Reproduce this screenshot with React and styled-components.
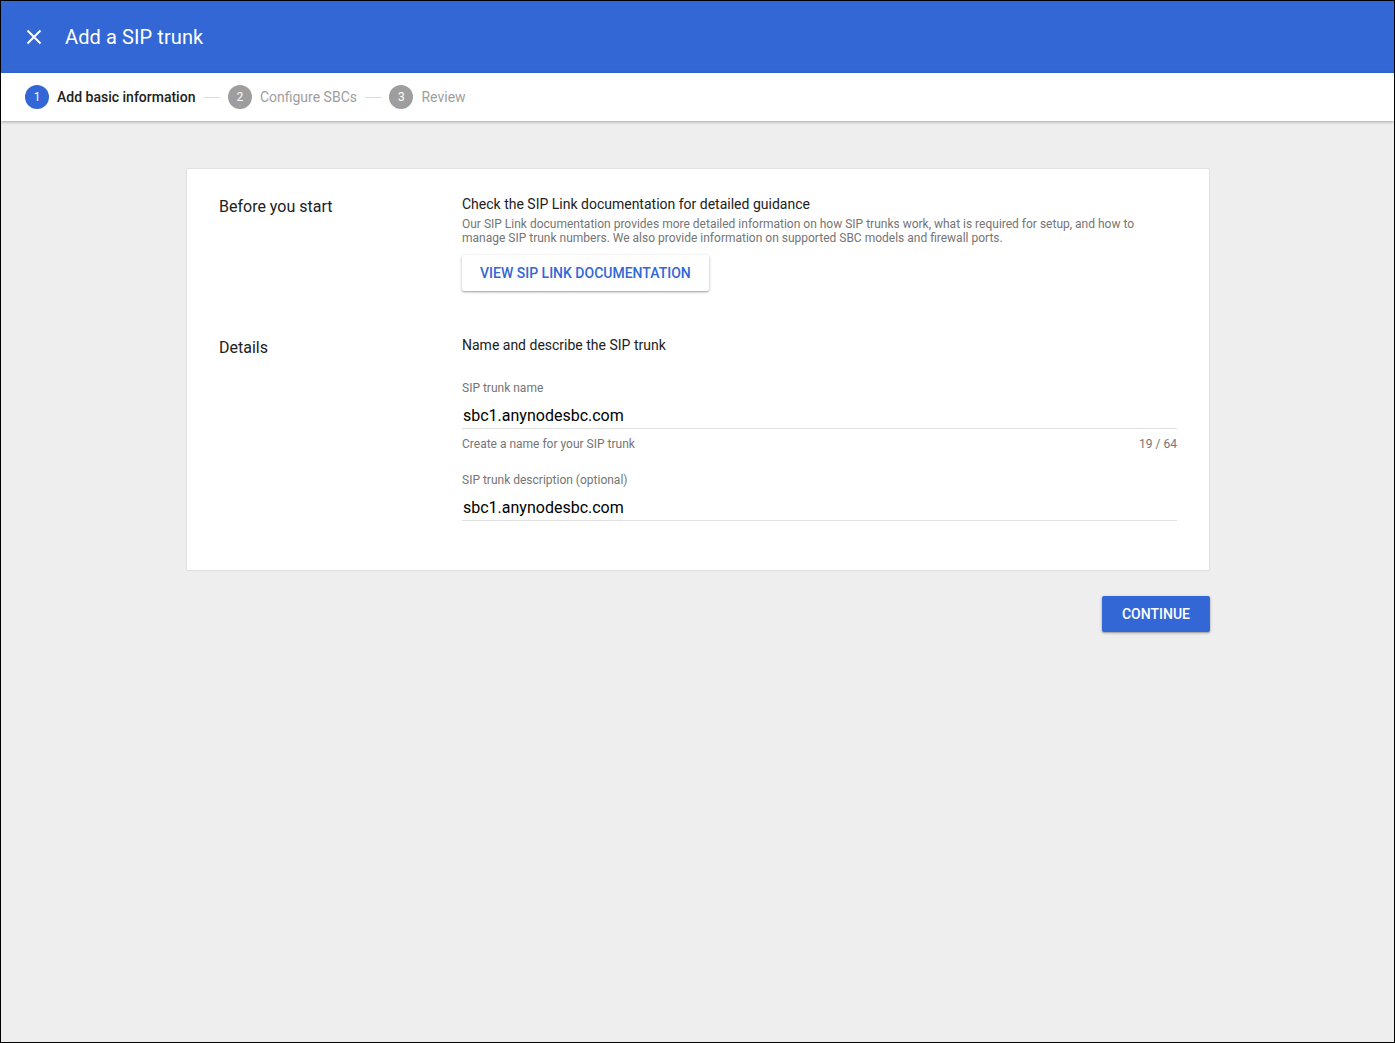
import React from 'react';
import styled, { createGlobalStyle } from 'styled-components';

const GlobalStyle = createGlobalStyle`
  html, body {
    margin: 0;
    padding: 0;
  }
  body {
    font-family: Roboto, "Liberation Sans", Arial, sans-serif;
    background: #eeeeee;
  }
  * { box-sizing: border-box; }
`;

const Frame = styled.div`
  width: 1395px;
  height: 1043px;
  border: 1px solid #000;
  background: #eeeeee;
  display: flex;
  flex-direction: column;
  overflow: hidden;
`;

const Header = styled.header`
  height: 72px;
  background: #3367d6;
  display: flex;
  align-items: center;
  padding-left: 24px;
  color: #fff;
  flex-shrink: 0;
`;

const CloseButton = styled.button`
  width: 18px;
  height: 18px;
  padding: 0;
  border: none;
  background: transparent;
  display: flex;
  align-items: center;
  justify-content: center;
  cursor: pointer;
  margin-right: 22px;
`;

const Title = styled.h1`
  margin: 0;
  font-size: 20px;
  font-weight: 400;
  letter-spacing: 0.1px;
`;

const Stepper = styled.nav`
  height: 48px;
  background: #fff;
  display: flex;
  align-items: center;
  padding-left: 24px;
  box-shadow: 0 1px 3px rgba(0, 0, 0, 0.3);
  position: relative;
  z-index: 1;
  flex-shrink: 0;
`;

const Step = styled.div`
  display: flex;
  align-items: center;
  gap: 8px;
`;

const StepCircle = styled.span`
  width: 24px;
  height: 24px;
  border-radius: 50%;
  background: ${p => (p.active ? '#3367d6' : '#9e9e9e')};
  color: #fff;
  font-size: 12px;
  display: flex;
  align-items: center;
  justify-content: center;
`;

const StepLabel = styled.span`
  font-size: 14px;
  font-weight: ${p => (p.active ? 500 : 400)};
  color: ${p => (p.active ? '#212121' : '#9e9e9e')};
`;

const StepLine = styled.span`
  width: 16px;
  height: 1px;
  background: #dadada;
  margin: 0 8px 0 8.5px;
`;

const Main = styled.main`
  width: 1024px;
  margin: 47px 0 0 185px;
`;

const Card = styled.section`
  background: #fff;
  border: 1px solid #e0e0e0;
  border-radius: 2px;
  padding: 26px 32px 49px;
`;

const Section = styled.div`
  display: grid;
  grid-template-columns: 243px 1fr;
  & + & {
    margin-top: 45px;
  }
`;

const SectionLabel = styled.div`
  font-size: 16px;
  color: #212121;
  padding-top: 2px;
`;

const SectionBody = styled.div`
  display: flex;
  flex-direction: column;
  align-items: flex-start;
`;

const Lead = styled.div`
  font-size: 14px;
  color: #212121;
  line-height: 18px;
`;

const Help = styled.p`
  margin: 4px 0 0;
  font-size: 12px;
  line-height: 14px;
  color: #757575;
  max-width: 690px;
`;

const RaisedButton = styled.button`
  margin-top: 10px;
  height: 36px;
  padding: 0 ${p => (p.primary ? 20 : 18)}px;
  border: none;
  border-radius: 2px;
  background: ${p => (p.primary ? '#3367d6' : '#fff')};
  color: ${p => (p.primary ? '#fff' : '#3367d6')};
  font-family: inherit;
  font-size: 14px;
  font-weight: 500;
  text-transform: uppercase;
  box-shadow: 0 1px 3px rgba(0, 0, 0, 0.3), 0 1px 1px rgba(0, 0, 0, 0.12);
  cursor: pointer;
`;

const Field = styled.div`
  width: 100%;
  margin-top: ${p => p.gap || 0}px;
`;

const FieldLabel = styled.label`
  display: block;
  font-size: 12px;
  color: #757575;
  line-height: 14px;
`;

const FieldInput = styled.input`
  display: block;
  width: 100%;
  margin-top: 8px;
  border: none;
  border-bottom: 1px solid #e0e0e0;
  padding: 0 0 1px 1px;
  height: 26px;
  font-family: inherit;
  font-size: 16px;
  color: #000;
  background: transparent;
  outline: none;
`;

const FieldHint = styled.div`
  display: flex;
  justify-content: space-between;
  font-size: 12px;
  color: #757575;
  margin-top: 8px;
  line-height: 14px;
`;

const Actions = styled.div`
  display: flex;
  justify-content: flex-end;
  margin-top: 15px;
`;

const CloseIcon = () => (
  <svg width="16" height="16" viewBox="0 0 16 16">
    <path d="M1.5 1.5 L14.5 14.5 M14.5 1.5 L1.5 14.5" stroke="#fff" strokeWidth="2" />
  </svg>
);

const steps = [
  { n: 1, label: 'Add basic information', active: true },
  { n: 2, label: 'Configure SBCs' },
  { n: 3, label: 'Review' },
];

export default function App() {
  return (
    <>
      <GlobalStyle />
      <Frame>
        <Header>
          <CloseButton aria-label="Close">
            <CloseIcon />
          </CloseButton>
          <Title>Add a SIP trunk</Title>
        </Header>
        <Stepper>
          {steps.map((s, i) => (
            <React.Fragment key={s.n}>
              {i > 0 && <StepLine />}
              <Step>
                <StepCircle active={s.active}>{s.n}</StepCircle>
                <StepLabel active={s.active}>{s.label}</StepLabel>
              </Step>
            </React.Fragment>
          ))}
        </Stepper>
        <Main>
          <Card>
            <Section>
              <SectionLabel>Before you start</SectionLabel>
              <SectionBody>
                <Lead>Check the SIP Link documentation for detailed guidance</Lead>
                <Help>
                  Our SIP Link documentation provides more detailed information on how SIP trunks work, what is
                  required for setup, and how to manage SIP trunk numbers. We also provide information on
                  supported SBC models and firewall ports.
                </Help>
                <RaisedButton>View SIP Link documentation</RaisedButton>
              </SectionBody>
            </Section>
            <Section>
              <SectionLabel>Details</SectionLabel>
              <SectionBody>
                <Lead>Name and describe the SIP trunk</Lead>
                <Field gap={27}>
                  <FieldLabel>SIP trunk name</FieldLabel>
                  <FieldInput defaultValue="sbc1.anynodesbc.com" />
                  <FieldHint>
                    <span>Create a name for your SIP trunk</span>
                    <span>19 / 64</span>
                  </FieldHint>
                </Field>
                <Field gap={22}>
                  <FieldLabel>SIP trunk description (optional)</FieldLabel>
                  <FieldInput defaultValue="sbc1.anynodesbc.com" />
                </Field>
              </SectionBody>
            </Section>
          </Card>
          <Actions>
            <RaisedButton primary>Continue</RaisedButton>
          </Actions>
        </Main>
      </Frame>
    </>
  );
}
